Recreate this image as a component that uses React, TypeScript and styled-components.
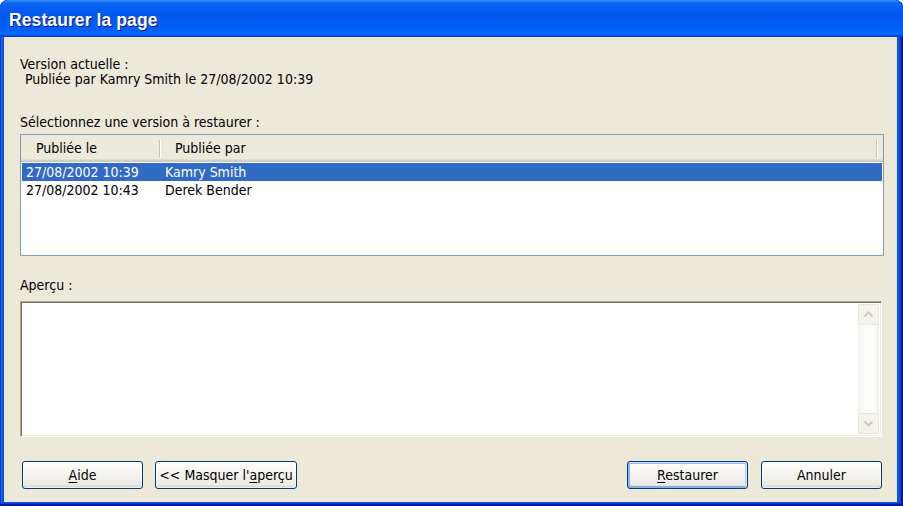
import React, { useState } from "react";
import styled, { createGlobalStyle } from "styled-components";

type Version = { date: string; author: string };

const versions: Version[] = [
  { date: "27/08/2002 10:39", author: "Kamry Smith" },
  { date: "27/08/2002 10:43", author: "Derek Bender" },
];

const Chevron = ({ up }: { up?: boolean }) => (
  <svg width="11" height="7" viewBox="0 0 11 7">
    <path
      d={up ? "M1.5 5.5 L5.5 1.5 L9.5 5.5" : "M1.5 1.5 L5.5 5.5 L9.5 1.5"}
      fill="none"
      stroke="#cbc8bc"
      strokeWidth="2"
    />
  </svg>
);

const App = () => {
  const [selected, setSelected] = useState(0);

  return (
    <>
      <GlobalStyle />
      <Window>
        <TitleBar>
          <Title>Restaurer la page</Title>
        </TitleBar>
        <Body>
          <Label>Version actuelle :</Label>
          <CurrentInfo>Publiée par Kamry Smith le 27/08/2002 10:39</CurrentInfo>

          <SectionLabel>Sélectionnez une version à restaurer :</SectionLabel>
          <ListBox>
            <Header>
              <HeaderCell $width={139}>Publiée le</HeaderCell>
              <HeaderCell $width={717}>Publiée par</HeaderCell>
            </Header>
            <Rows>
              {versions.map((v, i) => (
                <Row key={v.date} $selected={i === selected} onClick={() => setSelected(i)}>
                  <DateCell>{v.date}</DateCell>
                  <Cell>{v.author}</Cell>
                </Row>
              ))}
            </Rows>
          </ListBox>

          <PreviewLabel>Aperçu :</PreviewLabel>
          <Preview>
            <PreviewText />
            <ScrollBar>
              <ScrollButton>
                <Chevron up />
              </ScrollButton>
              <ScrollTrack />
              <ScrollButton>
                <Chevron />
              </ScrollButton>
            </ScrollBar>
          </Preview>

          <ButtonRow>
            <Button>
              <u>A</u>ide
            </Button>
            <Button $wide>
              &lt;&lt; Masquer l'<u>a</u>perçu
            </Button>
            <Spacer />
            <Button $default>
              <u>R</u>estaurer
            </Button>
            <Button>Annuler</Button>
          </ButtonRow>
        </Body>
      </Window>
    </>
  );
};

export default App;

const uiFont = `"DejaVu Sans Condensed", "DejaVu Sans", sans-serif`;

const GlobalStyle = createGlobalStyle`
  html, body {
    margin: 0;
    padding: 0;
    background: #ffffff;
  }
  body {
    font-family: ${uiFont};
    font-stretch: condensed;
    font-size: 14px;
    color: #000;
  }
`;

const Window = styled.div`
  width: 903px;
  height: 506px;
  display: flex;
  flex-direction: column;
  background: #0855dd;
  border-radius: 8px 8px 0 0;
  box-shadow: inset -1px -1px #00138c, inset 1px 1px #0831d9, inset -2px -2px #001ea0,
    inset 2px 2px #166aee, inset -3px -3px #003bda, inset 3px 3px #0855dd;
  overflow: hidden;
`;

const TitleBar = styled.div`
  height: 37px;
  flex: 0 0 auto;
  display: flex;
  align-items: center;
  padding: 3px 0 0 9px;
  box-sizing: border-box;
  border-radius: 8px 8px 0 0;
  background: linear-gradient(
    180deg,
    #3d95ff 0%,
    #0a64f4 9%,
    #0058ee 40%,
    #0062fb 85%,
    #0a6bff 92%,
    #005bff 95%,
    #003dd7 97%,
    #003dd7 100%
  );
`;

const Title = styled.span`
  font-family: "Liberation Sans", Arial, sans-serif;
  font-stretch: normal;
  font-weight: bold;
  font-size: 17.5px;
  color: #fff;
  letter-spacing: 0.1px;
  text-shadow: 1px 1px #0f1089;
`;

const Body = styled.div`
  flex: 1;
  margin: 0 6px 4px 4px;
  background: #ece9d8;
  display: flex;
  flex-direction: column;
  padding: 20px 15px 13px 16px;
`;

const Label = styled.div`
  line-height: 15px;
  white-space: nowrap;
`;

const CurrentInfo = styled(Label)`
  padding-left: 5px;
`;

const SectionLabel = styled(Label)`
  margin-top: 28px;
`;

const PreviewLabel = styled(Label)`
  margin-top: 22px;
`;

const ListBox = styled.div`
  margin-top: 4px;
  margin-right: -2px;
  height: 122px;
  box-sizing: border-box;
  border: 1px solid #7f9db9;
  background: #fff;
  overflow: hidden;
`;

const Header = styled.div`
  display: flex;
  height: 27px;
  background: #ebeadb;
  box-shadow: inset 0 -1px #cbc7b8, inset 0 -2px #d6d2c2, inset 0 -3px #e2decd;
`;

const HeaderCell = styled.div<{ $width: number }>`
  width: ${(p) => p.$width}px;
  flex: 0 0 auto;
  position: relative;
  box-sizing: border-box;
  padding: 4px 0 0 15px;
  line-height: 18px;
  white-space: nowrap;

  &::after {
    content: "";
    position: absolute;
    right: 0;
    top: 5px;
    bottom: 4px;
    width: 1px;
    background: #c7c5b2;
    box-shadow: 1px 0 #fff;
  }
`;

const Rows = styled.div`
  padding: 1px 1px 0 1px;
`;

const Row = styled.div<{ $selected: boolean }>`
  display: flex;
  height: 18px;
  line-height: 18px;
  cursor: default;
  background: ${(p) => (p.$selected ? "#316ac5" : "transparent")};
  color: ${(p) => (p.$selected ? "#fff" : "#000")};
`;

const DateCell = styled.div`
  width: 138px;
  flex: 0 0 auto;
  padding-left: 4px;
  box-sizing: border-box;
  white-space: nowrap;
`;

const Cell = styled.div`
  padding-left: 5px;
  white-space: nowrap;
`;

const Preview = styled.div`
  margin-top: 8px;
  height: 136px;
  box-sizing: border-box;
  display: flex;
  background: #fff;
  border: 1px solid;
  border-color: #aca899 #fff #fff #aca899;
  box-shadow: inset 1px 1px #716f64, inset -1px -1px #f1efe2;
  padding: 2px;
`;

const PreviewText = styled.div`
  flex: 1;
`;

const ScrollBar = styled.div`
  width: 21px;
  display: flex;
  flex-direction: column;
  background: linear-gradient(90deg, #f3f1ec 0%, #fdfdfa 35%, #fdfdfa 70%, #f3f1ec 100%);
`;

const ScrollButton = styled.div`
  height: 21px;
  box-sizing: border-box;
  display: flex;
  align-items: center;
  justify-content: center;
  border: 1px solid #e8e6dd;
  border-radius: 2px;
  background: #f4f3ee;
`;

const ScrollTrack = styled.div`
  flex: 1;
`;

const ButtonRow = styled.div`
  margin-top: 24px;
  display: flex;
  padding-left: 2px;
  gap: 12px;
`;

const Spacer = styled.div`
  flex: 1;
`;

const Button = styled.button<{ $wide?: boolean; $default?: boolean }>`
  width: ${(p) => (p.$wide ? 142 : 121)}px;
  height: 28px;
  padding: 0;
  font-family: ${uiFont};
  font-stretch: condensed;
  font-size: 14px;
  color: #000;
  white-space: nowrap;
  border: 1px solid #003c74;
  border-radius: 3px;
  background: linear-gradient(180deg, #fff 0%, #f5f4ef 40%, #ecebe6 86%, #d6d0c5 100%);
  box-shadow: ${(p) =>
    p.$default
      ? "inset -1px 1px #cee7ff, inset 1px 2px #98b8ea, inset -2px 2px #bcd4f6, inset 1px -1px #89ade4, inset 2px -2px #89ade4"
      : "inset 0 0 0 1px rgba(255,255,255,0.6)"};
  cursor: default;

  &:last-child {
    margin-left: 1px;
  }

  u {
    text-underline-offset: 2px;
  }
`;
